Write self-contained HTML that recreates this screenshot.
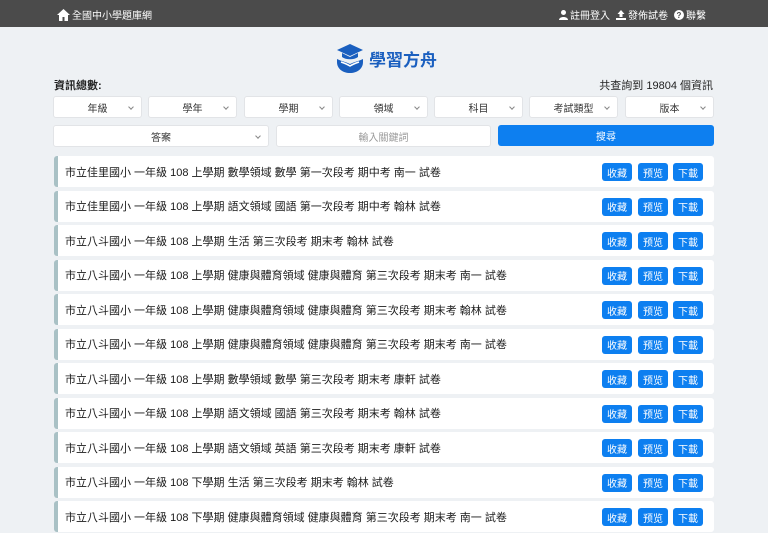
<!DOCTYPE html>
<html><head><meta charset="utf-8"><style>
*{box-sizing:border-box;margin:0;padding:0}
body{width:768px;height:533px;overflow:hidden;background:#eef1f4;font-family:"Liberation Sans","Noto Sans CJK TC",sans-serif;color:#222;position:relative}
.hdr{position:absolute;left:0;top:0;width:768px;height:27px;background:#4b4b4b;color:#fff;font-size:10px}
.hdr .l{position:absolute;left:57px;top:7px;display:flex;align-items:center;gap:2px}
.hdr .r{position:absolute;right:62px;top:7px;display:flex;align-items:center;gap:6px}
.hdr span{display:flex;align-items:center;gap:2px}
.logo{position:absolute;left:335px;top:42px;display:flex;align-items:center;gap:4px;color:#1a5fbf;font-weight:bold;font-size:17px}
.t1{position:absolute;left:54px;top:77px;font-size:11px;font-weight:bold}
.t2{position:absolute;right:55px;top:77px;font-size:11px}
.sel{position:absolute;height:22px;background:#fff;border:1px solid #e2e4e7;border-radius:3px;font-size:10px;display:flex;align-items:center;justify-content:center;color:#333}
.sel:after{content:"";position:absolute;right:8px;top:8px;width:3px;height:3px;border-right:1px solid #888;border-bottom:1px solid #888;transform:rotate(45deg)}
.sel.kw:after{display:none}
.btn{position:absolute;left:498px;top:125px;width:216px;height:21px;background:#0d7ff0;border-radius:3px;color:#fff;font-size:10px;display:flex;align-items:center;justify-content:center}
.row{position:absolute;left:54px;width:660px;height:31px;background:#fff;border-left:4px solid #a9c1c5;border-radius:3px;font-size:11px;display:flex;align-items:center;padding-left:7px;color:#1a1a1a}
.b{position:absolute;top:7px;width:30px;height:18px;background:#0d7ff0;color:#fff;border-radius:3px;font-size:10px;display:flex;align-items:center;justify-content:center}
</style></head><body>
<div class="hdr">
<div class="l"><svg width="13" height="12" viewBox="0 0 13 12"><path d="M6.5 0L0 6h2v6h3.5V8h2v4H11V6h2z" fill="#fff"/></svg>全國中小學題庫網</div>
<div class="r"><span><svg width="9" height="10" viewBox="0 0 9 10"><circle cx="4.5" cy="2.5" r="2.5" fill="#fff"/><path d="M0 10c0-4 9-4 9 0z" fill="#fff"/></svg>註冊登入</span><span><svg width="10" height="10" viewBox="0 0 10 10"><path d="M5 0L1.5 4h2v3h3V4h2zM0 8h10v2H0z" fill="#fff"/></svg>發佈試卷</span><span><svg width="10" height="10" viewBox="0 0 10 10"><circle cx="5" cy="5" r="5" fill="#fff"/><text x="5" y="8" font-size="8" text-anchor="middle" fill="#4b4b4b" font-weight="bold">?</text></svg>聯繫</span></div>
</div>
<div class="logo"><svg width="30" height="32" viewBox="0 0 30 32"><path d="M15 2L2 8l13 6 13-6z" fill="#1a5fbf"/><path d="M7 11v4c4 3 12 3 16 0v-4l-8 4z" fill="#1a5fbf"/><path d="M2 17c4 2 9 3 13 5 4-2 9-3 13-5v3c0 7-6 11-13 11S2 27 2 20z" fill="#1a5fbf"/><path d="M6 20c3 1 6 2 9 4 3-2 6-3 9-4" stroke="#fff" stroke-width="1.5" fill="none"/></svg>學習方舟</div>
<div class="t1">資訊總數:</div>
<div class="t2">共查詢到 19804 個資訊</div>
<div class="sel" style="left:53px;top:96px;width:89px">年級</div>
<div class="sel" style="left:148px;top:96px;width:89px">學年</div>
<div class="sel" style="left:244px;top:96px;width:89px">學期</div>
<div class="sel" style="left:339px;top:96px;width:89px">領域</div>
<div class="sel" style="left:434px;top:96px;width:89px">科目</div>
<div class="sel" style="left:529px;top:96px;width:89px">考試類型</div>
<div class="sel" style="left:625px;top:96px;width:89px">版本</div>
<div class="sel" style="left:53px;top:125px;width:216px">答案</div>
<div class="sel kw" style="left:276px;top:125px;width:215px;color:#999">輸入關鍵詞</div>
<div class="btn">搜尋</div>
<div class="row" style="top:156px">市立佳里國小 一年級 108 上學期 數學領域 數學 第一次段考 期中考 南一 試卷<div class="b" style="left:544px">收藏</div><div class="b" style="left:580px">预览</div><div class="b" style="left:615px">下載</div></div>
<div class="row" style="top:190.5px">市立佳里國小 一年級 108 上學期 語文領域 國語 第一次段考 期中考 翰林 試卷<div class="b" style="left:544px">收藏</div><div class="b" style="left:580px">预览</div><div class="b" style="left:615px">下載</div></div>
<div class="row" style="top:225px">市立八斗國小 一年級 108 上學期 生活 第三次段考 期末考 翰林 試卷<div class="b" style="left:544px">收藏</div><div class="b" style="left:580px">预览</div><div class="b" style="left:615px">下載</div></div>
<div class="row" style="top:259.5px">市立八斗國小 一年級 108 上學期 健康與體育領域 健康與體育 第三次段考 期末考 南一 試卷<div class="b" style="left:544px">收藏</div><div class="b" style="left:580px">预览</div><div class="b" style="left:615px">下載</div></div>
<div class="row" style="top:294px">市立八斗國小 一年級 108 上學期 健康與體育領域 健康與體育 第三次段考 期末考 翰林 試卷<div class="b" style="left:544px">收藏</div><div class="b" style="left:580px">预览</div><div class="b" style="left:615px">下載</div></div>
<div class="row" style="top:328.5px">市立八斗國小 一年級 108 上學期 健康與體育領域 健康與體育 第三次段考 期末考 南一 試卷<div class="b" style="left:544px">收藏</div><div class="b" style="left:580px">预览</div><div class="b" style="left:615px">下載</div></div>
<div class="row" style="top:363px">市立八斗國小 一年級 108 上學期 數學領域 數學 第三次段考 期末考 康軒 試卷<div class="b" style="left:544px">收藏</div><div class="b" style="left:580px">预览</div><div class="b" style="left:615px">下載</div></div>
<div class="row" style="top:397.5px">市立八斗國小 一年級 108 上學期 語文領域 國語 第三次段考 期末考 翰林 試卷<div class="b" style="left:544px">收藏</div><div class="b" style="left:580px">预览</div><div class="b" style="left:615px">下載</div></div>
<div class="row" style="top:432px">市立八斗國小 一年級 108 上學期 語文領域 英語 第三次段考 期末考 康軒 試卷<div class="b" style="left:544px">收藏</div><div class="b" style="left:580px">预览</div><div class="b" style="left:615px">下載</div></div>
<div class="row" style="top:466.5px">市立八斗國小 一年級 108 下學期 生活 第三次段考 期末考 翰林 試卷<div class="b" style="left:544px">收藏</div><div class="b" style="left:580px">预览</div><div class="b" style="left:615px">下載</div></div>
<div class="row" style="top:501px">市立八斗國小 一年級 108 下學期 健康與體育領域 健康與體育 第三次段考 期末考 南一 試卷<div class="b" style="left:544px">收藏</div><div class="b" style="left:580px">预览</div><div class="b" style="left:615px">下載</div></div>
</body></html>
